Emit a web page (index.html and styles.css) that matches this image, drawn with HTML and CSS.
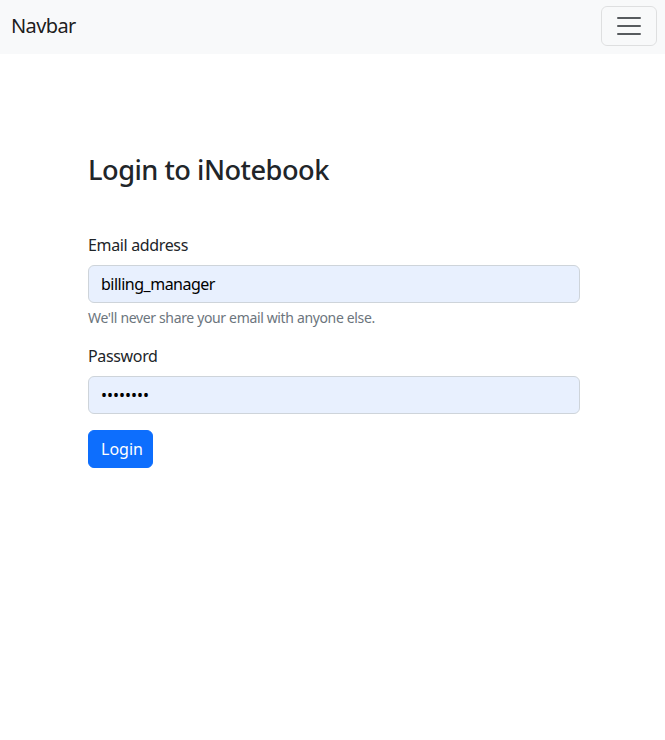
FILE: index.html
```html
<!DOCTYPE html>
<html lang="en">
<head>
<meta charset="utf-8">
<title>iNotebook</title>
<link rel="stylesheet" href="styles.css">
</head>
<body>
<nav class="navbar">
  <a class="brand" href="#">Navbar</a>
  <button class="toggler" type="button" aria-label="Toggle navigation">
    <svg class="toggler-icon" viewBox="0 0 30 30" width="30" height="30">
      <path d="M4 7h22M4 15h22M4 23h22" stroke="rgba(33,37,41,0.75)" stroke-width="2" stroke-linecap="round" stroke-miterlimit="10" fill="none"/>
    </svg>
  </button>
</nav>
<main class="page">
  <h2 class="title">Login to iNotebook</h2>
  <form class="form">
    <div class="field">
      <label class="label" for="email">Email address</label>
      <input class="control" id="email" type="text" value="billing_manager">
      <div class="help">We'll never share your email with anyone else.</div>
    </div>
    <div class="field">
      <label class="label" for="password">Password</label>
      <input class="control control-pass" id="password" type="password" value="password">
    </div>
    <button class="btn" type="button">Login</button>
  </form>
</main>
</body>
</html>
```

FILE: styles.css
```css
* { box-sizing: border-box; }
html, body { margin: 0; padding: 0; }
body {
  font-family: "Segoe UI", "Noto Sans", "Liberation Sans", sans-serif;
  font-size: 16px;
  line-height: 1.5;
  letter-spacing: -0.35px;
  color: #212529;
  background: #fff;
}
.navbar {
  display: flex;
  align-items: center;
  justify-content: space-between;
  background: #f8f9fa;
  height: 54px;
  padding: 0 8px 2px 11px;
}
.brand {
  font-size: 20px;
  line-height: 30px;
  letter-spacing: -0.6px;
  color: rgba(0,0,0,0.9);
  text-decoration: none;
}
.toggler {
  display: flex;
  align-items: center;
  justify-content: center;
  width: 56px;
  height: 40px;
  padding: 0;
  background: transparent;
  border: 1px solid rgba(0,0,0,0.1);
  border-radius: 6px;
}
.toggler-icon { display: block; }
.page {
  width: 492px;
  margin: 0 0 0 88px;
  padding-top: 100px;
}
.title {
  margin: 0 0 46px;
  font-size: 27.2px;
  font-weight: 500;
  line-height: 1.2;
  letter-spacing: -0.5px;
}
.form { display: flex; flex-direction: column; }
.field { margin-bottom: 16px; }
.label {
  display: block;
  margin-bottom: 8px;
}
.control {
  display: block;
  width: 100%;
  height: 38px;
  padding: 6px 12px;
  font: inherit;
  letter-spacing: -0.5px;
  color: #000;
  background: #e8f0fe;
  border: 1px solid #ced4da;
  border-radius: 6px;
}
.control-pass { letter-spacing: 0; }
.help {
  margin-top: 4px;
  font-size: 14px;
  color: #6c757d;
}
.btn {
  align-self: flex-start;
  width: 65px;
  height: 38px;
  padding: 6px 12px;
  font: inherit;
  color: #fff;
  background: #0d6efd;
  border: 1px solid #0d6efd;
  border-radius: 6px;
}
```
